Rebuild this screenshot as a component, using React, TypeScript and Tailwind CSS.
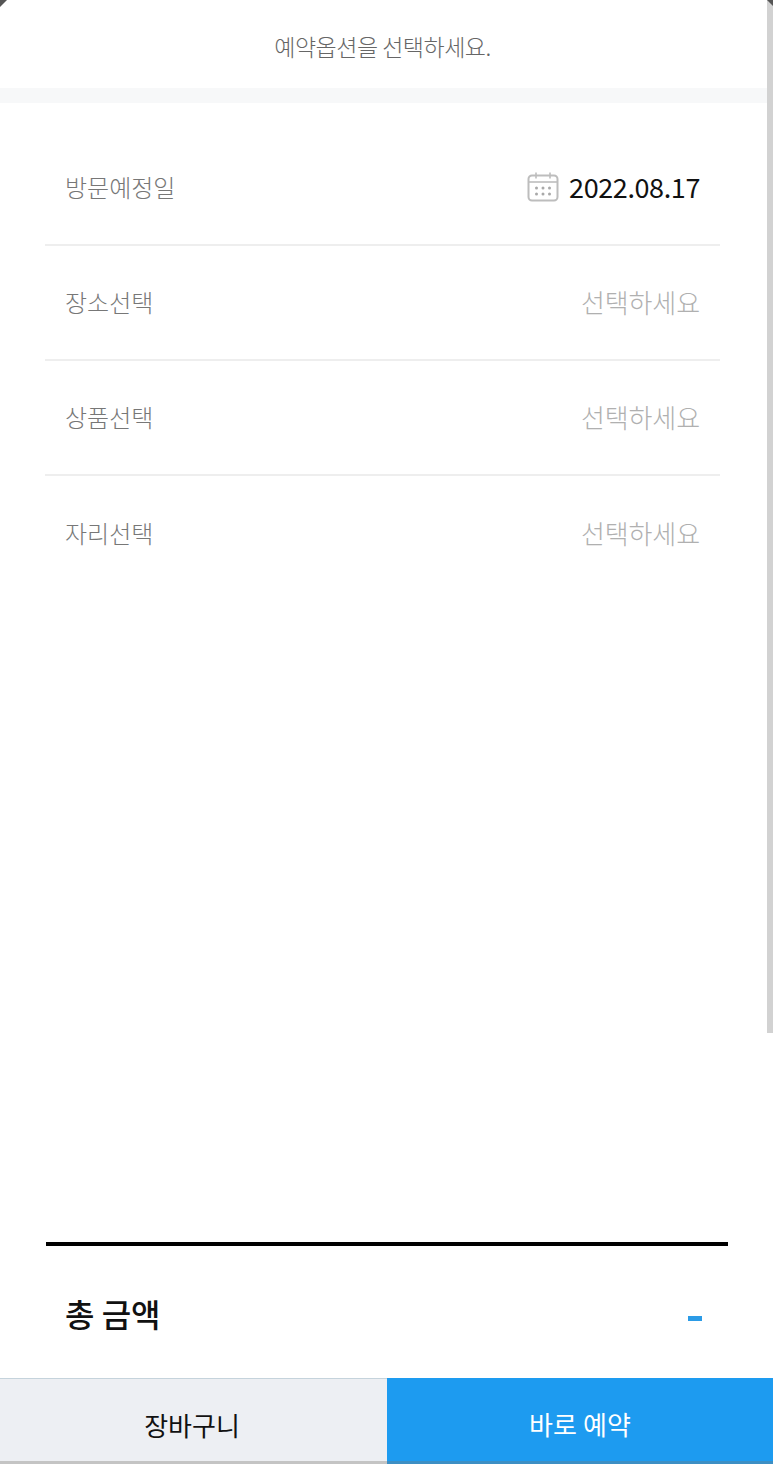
import React from "react";

const font = { fontFamily: '"Noto Sans CJK KR", "Noto Sans", sans-serif' };

function CalendarIcon() {
  return (
    <svg width="32" height="32" viewBox="0 0 32 32" fill="none" stroke="#bdbdbd" strokeWidth="2">
      <rect x="1.5" y="4.5" width="29" height="25" rx="3.5" />
      <path d="M1.5 11h29" strokeWidth="1.6" />
      <path d="M9 1.5v6M23 1.5v6" strokeWidth="1.6" />
      <g fill="#a9a9a9" stroke="none">
        <circle cx="9.5" cy="17" r="1.5" />
        <circle cx="16" cy="17" r="1.5" />
        <circle cx="22.5" cy="17" r="1.5" />
        <circle cx="9.5" cy="23" r="1.5" />
        <circle cx="16" cy="23" r="1.5" />
        <circle cx="22.5" cy="23" r="1.5" />
      </g>
    </svg>
  );
}

function Row({ label, last, children }: { label: string; last?: boolean; children: React.ReactNode }) {
  return (
    <div className={`flex h-[115px] items-center justify-between pl-[20px] pr-5 pb-[3px] ${last ? "" : "border-b-2 border-[#eeeeee]"}`}>
      <span className="pt-[1px] text-[24px] font-light text-[#777777]">{label}</span>
      {children}
    </div>
  );
}

function Placeholder() {
  return <span className="text-[26px] font-light tracking-[-0.1px] text-[#b0b0b0]">선택하세요</span>;
}

export default function App() {
  return (
    <div className="relative flex h-[1464px] w-[773px] flex-col overflow-hidden bg-white" style={font}>
      <div className="absolute left-0 top-0 h-[7px] w-[7px] bg-[#555555] [clip-path:polygon(0_0,100%_0,0_100%)]" />
      <div className="absolute right-0 top-0 h-[1033px] w-[6px] bg-[#d2d2d2]" />
      <div className="absolute right-0 top-0 h-[6px] w-[6px] bg-[#555555] [clip-path:polygon(0_0,100%_0,100%_100%)]" />

      <div className="flex h-[88px] shrink-0 items-center justify-center pt-[4px] pr-[8px]">
        <span className="text-[23px] font-light tracking-[-0.5px] text-[#666666]">예약옵션을 선택하세요.</span>
      </div>
      <div className="mr-[6px] h-[15px] shrink-0 bg-[#f7f8f9]" />

      <div className="ml-[45px] mr-[53px] mt-[28px] flex flex-col">
        <Row label="방문예정일">
          <div className="flex items-center gap-[10px] pt-[2px]">
            <CalendarIcon />
            <span className="text-[27px] tracking-[-0.4px] text-[#111111]">2022.08.17</span>
          </div>
        </Row>
        <Row label="장소선택">
          <Placeholder />
        </Row>
        <Row label="상품선택">
          <Placeholder />
        </Row>
        <Row label="자리선택" last>
          <Placeholder />
        </Row>
      </div>

      <div className="flex-1" />

      <div className="ml-[46px] mr-[45px] h-[4px] shrink-0 bg-black" />
      <div className="flex h-[132px] shrink-0 items-center justify-between pl-[65px] pr-[71px]">
        <span className="pt-[2px] text-[32px] font-medium text-[#111111]">총 금액</span>
        <span className="mt-[12px] h-[5px] w-[14px] bg-[#2b9be6]" />
      </div>

      <div className="flex h-[86px] shrink-0">
        <div className="flex w-[387px] flex-col border-t border-[#c5d3dc] bg-[#edeff3]">
          <div className="flex flex-1 items-center justify-center pt-[8px] pr-[3px] text-[26px] text-[#111111]">장바구니</div>
          <div className="h-[3px] bg-[#c4c4c4]" />
        </div>
        <div className="flex flex-1 flex-col bg-[#1d9bf0]">
          <div className="flex flex-1 items-center justify-center pt-[8px] text-[26px] tracking-[0.1px] text-white">바로 예약</div>
          <div className="h-[3px] bg-[#3d8fc4]" />
        </div>
      </div>
    </div>
  );
}
